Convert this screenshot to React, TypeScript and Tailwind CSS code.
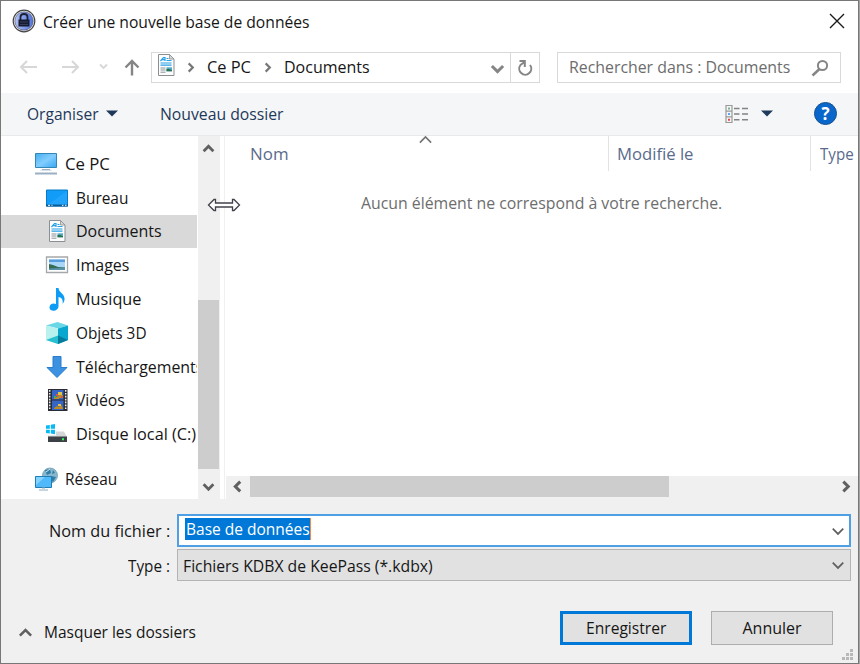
import { useLayoutEffect, useRef, useState, type ReactNode } from 'react';

/** One line of text, condensed to the width that its label takes up. */
function Label({ children, w, className = '' }: { children: string; w: number; className?: string }) {
  const ref = useRef<HTMLSpanElement>(null);
  const [scale, setScale] = useState(1);
  useLayoutEffect(() => {
    if (ref.current) setScale(w / ref.current.offsetWidth);
  }, [w, children]);
  return (
    <span className={`flex h-6 shrink-0 items-center ${className}`} style={{ width: w }}>
      <span
        ref={ref}
        className="inline-block shrink-0 origin-left whitespace-pre"
        style={{ transform: `scaleX(${scale})` }}
      >
        {children}
      </span>
    </span>
  );
}

type Dir = 'up' | 'down' | 'left' | 'right';
const chevrons: Record<Dir, string> = {
  up: 'M1.5 8.5L6 4L10.5 8.5',
  down: 'M1.5 4L6 8.5L10.5 4',
  left: 'M8.5 1.5L4 6L8.5 10.5',
  right: 'M4 1.5L8.5 6L4 10.5',
};
function Chevron({ dir, size = 12, stroke = 2.4, color = '#606060', className = '' }: { dir: Dir; size?: number; stroke?: number; color?: string; className?: string }) {
  return (
    <svg width={size} height={size} viewBox="0 0 12 12" className={`shrink-0 ${className}`}>
      <path d={chevrons[dir]} fill="none" stroke={color} strokeWidth={stroke} />
    </svg>
  );
}

function DocIcon() {
  return (
    <svg width="24" height="24" viewBox="0 0 24 24">
      <path d="M4.500 1.500h11l4.500 4.500v16.500H4.500z" fill="#fcfcfc" stroke="#8c8f91" />
      <path d="M15.500 1.500v4.500h4.500z" fill="#d5d8da" stroke="#8c8f91" strokeWidth=".8" />
      <path d="M6.500 8L9.500 4.500h1.500V8M8 6.700h3M12.500 5.500h2M12.500 7.500h5M6.500 10h11M6.500 12.200h11" fill="none" stroke="#25a0e8" strokeWidth="1.200" />
      <path d="M6.500 15h5M6.500 17h5M6.500 19.200h5" stroke="#8a9298" />
      <path d="M12.500 14.300h5.500v4h-5.500z" fill="#54a9c9" />
      <path d="M12.500 18.300v-2l2-.5 3.500 1.500v1z" fill="#28724a" />
    </svg>
  );
}
function PcIcon() {
  return (
    <svg width="24" height="24" viewBox="0 0 24 24">
      <defs><linearGradient id="pc" x2="1" y2="1"><stop stopColor="#45aeee" /><stop offset=".5" stopColor="#82cdff" /><stop offset="1" stopColor="#35a7f4" /></linearGradient></defs>
      <path d="M1.500 1.500h21v14h-21z" fill="url(#pc)" stroke="#3287b7" />
      <path d="M8 17.500h8" stroke="#8fa5b8" /><path d="M6.500 18.300h11" stroke="#d0dae3" strokeWidth="1" />
      <path d="M1 21.500h22" stroke="#9aafc5" strokeWidth="2" />
    </svg>
  );
}
function DesktopIcon() {
  return (
    <svg width="24" height="24" viewBox="0 0 24 24">
      <path d="M1.500 4h21v16h-21z" fill="#119cf8" stroke="#087bc4" />
      <path d="M2 19.500L22 5v14.500z" fill="#22a4fc" />
      <path d="M1 19.500h22" stroke="#075d96" strokeWidth="2" />
      <path d="M3 19.300h2M6.500 19.300h1M17 19.300h1.500M20 19.300h1.500" stroke="#fff" />
    </svg>
  );
}
function ImagesIcon() {
  return (
    <svg width="24" height="24" viewBox="0 0 24 24">
      <path d="M1.500 4h21v15.500h-21z" fill="#fff" stroke="#a5a8ab" strokeWidth="1.300" />
      <path d="M4 6.500h16V17H4z" fill="#a9d6f6" /><path d="M4 6.500h16V9H4z" fill="#579ddd" />
      <path d="M4 11l4 1 5 2 7 .5V17H4z" fill="#336b53" /><path d="M4 15.500l16-1V17H4z" fill="#5790a7" />
    </svg>
  );
}
function MusicIcon() {
  return (
    <svg width="24" height="24" viewBox="0 0 24 24">
      <path d="M11 1h2.500c.3 5 6.500 5.500 6 11.500-.1 1.700-1 3.300-2 4.200.9-4-.8-6-4-6.700v9c0 6-9 6-9 1.500 0-3.300 3.500-5 6.500-3.500z" fill="#0c9cf5" />
    </svg>
  );
}
function CubeIcon() {
  return (
    <svg width="24" height="24" viewBox="0 0 24 24">
      <path d="M1 4.500L12.500 1 23 4.500 13 7.500z" fill="#69d7e5" />
      <path d="M1 4.500l12 3V23L1 19z" fill="#b9f1ef" /><path d="M13 7.500l10-3V19L13 23z" fill="#07a7cf" />
      <path d="M1 19l12-4.500V23z" fill="#28bfd0" /><path d="M13 14.500L23 19l-10 4z" fill="#057b9e" />
    </svg>
  );
}
function DownloadIcon() {
  return (
    <svg width="24" height="24" viewBox="0 0 24 24">
      <path d="M8 1.500h8v11h6L12 22.500 2 12.500h6z" fill="#3c91e0" stroke="#2a7dcc" />
    </svg>
  );
}
function VideoIcon() {
  return (
    <svg width="24" height="24" viewBox="0 0 24 24">
      <path d="M3 1h19.500v22H3z" fill="#292c32" />
      <path d="M4.700 2v20M20.700 2v20" stroke="#eee" strokeWidth="1.500" strokeDasharray="1.700 1.200" />
      <path d="M7 2h11.500v9.500H7zM7 12.500h11.500V22H7z" fill="#3565c5" />
      <path d="M9 9h3l2-2h4v3h-4v1H9zM9 20l3-2 2 1 2-2 2 3v1H9z" fill="#be8a21" />
      <path d="M13 4h4v3h-4zM13 16h3v2h-3z" fill="#e3c342" /><path d="M11 6h2v2h-2zM16 8h2v2h-2z" fill="#dd563f" />
      <path d="M9 8h2v2H9z" fill="#4bac52" />
    </svg>
  );
}
function DiskIcon() {
  return (
    <svg width="24" height="24" viewBox="0 0 24 24">
      <path d="M1 3.500l3.800-.6v3.800H1zM5.800 2.700L10 2v4.700H5.800zM1 7.700h3.800v3.800L1 10.900zM5.800 7.700H10v4.600l-4.200-.7z" fill="#09b9f3" />
      <path d="M11 9.500h8l3 5.500H3v-1.500h8z" fill="#d4d6d8" />
      <path d="M3 14.500h19V20H3z" fill="#3b4144" /><path d="M3 14.500h19" stroke="#878d90" />
      <path d="M17 17.300h2" stroke="#3aff63" strokeWidth="2" />
    </svg>
  );
}
function NetworkIcon() {
  return (
    <svg width="24" height="24" viewBox="0 0 24 24">
      <circle cx="16" cy="8.500" r="7.500" fill="#87b8cf" stroke="#6693aa" strokeWidth=".7" />
      <path d="M11 3l5-1 1 4-4 2zM17 9l5 1-3 5-3-3zM19 3l2 3-3 1z" fill="#327da4" />
      <path d="M12 5l4-3" stroke="#d2edf5" />
      <path d="M1.500 9.500h16v11h-16z" fill="#50b9fa" stroke="#1f7db5" />
      <path d="M2 10h9L2 18z" fill="#83d2ff" /><path d="M5 23h9M8 21h3" stroke="#8eabbd" />
    </svg>
  );
}
function LockIcon() {
  return (
    <svg width="24" height="24" viewBox="0 0 24 24">
      <defs><linearGradient id="lock"><stop stopColor="#b6c4f4" /><stop offset="1" stopColor="#4f72dc" /></linearGradient></defs>
      <circle cx="12" cy="12" r="10.800" fill="#fff" stroke="#444" strokeWidth="1.200" />
      <circle cx="12" cy="12" r="9.200" fill="url(#lock)" stroke="#52576b" strokeWidth=".7" />
      <path d="M8.500 11V8c0-4 7-4 7 0v3" fill="none" stroke="#1b2035" strokeWidth="1.800" />
      <path d="M6.500 10.500h11v7h-11z" fill="#171b30" /><path d="M8 13h8M8 15.500h8" stroke="#3d4665" strokeWidth=".8" />
    </svg>
  );
}

function TreeRow({ icon, text, w, selected = false, root = false }: { icon: ReactNode; text: string; w: number; selected?: boolean; root?: boolean }) {
  return (
    <div className={`flex h-[33.8px] shrink-0 items-center ${root ? 'gap-[7px] pl-[33px]' : 'gap-[7px] pl-[44px]'} ${selected ? 'bg-[#d9d9d9]' : ''}`}>
      <span className="shrink-0">{icon}</span>
      <Label w={w}>{text}</Label>
    </div>
  );
}

function TitleBar() {
  return (
    <div className="flex h-[50px] items-start pl-[11px] pr-[13px] pt-[8px]">
      <LockIcon />
      <Label w={267} className="ml-[7px] mt-px">Créer une nouvelle base de données</Label>
      <svg width="16" height="16" viewBox="0 0 16 16" className="ml-auto mt-[4px]"><path d="M1 1l14 14M15 1L1 15" stroke="#1a1a1a" strokeWidth="1.400" /></svg>
    </div>
  );
}

function AddressBar() {
  return (
    <div className="flex h-[42px] items-start pt-px">
      <svg width="150" height="31" viewBox="0 0 150 31" fill="none" className="shrink-0">
        <path d="M36 15H20M26 9l-6 6 6 6M61 15h16M71 9l6 6-6 6" stroke="#d7d7d7" strokeWidth="2" />
        <path d="M99 12.500l3.500 3.500 3.500-3.500" stroke="#d7d7d7" strokeWidth="1.800" />
        <path d="M131 23.500V9M124.500 15.500L131 9l6.500 6.500" stroke="#858585" strokeWidth="2.400" />
      </svg>
      <div className="flex h-[31px] w-[389px] border border-[#d9d9d9]">
        <div className="flex flex-1 items-center pb-px pl-[2px]">
          <span className="-mt-1"><DocIcon /></span>
          <Chevron dir="right" size={11} color="#777" className="ml-[7px] mt-px" />
          <Label w={44} className="ml-[11px]">Ce PC</Label>
          <Chevron dir="right" size={11} color="#777" className="ml-[11px] mt-px" />
          <Label w={86} className="ml-[11px]">Documents</Label>
          <Chevron dir="down" size={15} color="#858585" className="ml-auto mr-[5px] mt-[3px]" />
        </div>
        <div className="flex w-[29px] items-center justify-center border-l border-[#d9d9d9]">
          <svg width="16" height="18" viewBox="0 0 16 18" fill="none" className="mt-px"><path d="M13 6A6 6 0 1 1 3.500 6L7.500 3M2.500 2h5.300v6" stroke="#858585" strokeWidth="2" /></svg>
        </div>
      </div>
      <div className="ml-[17px] flex h-[31px] w-[284px] items-center border border-[#d9d9d9] pb-px pl-[11px] text-[#6d6d6d]">
        <Label w={221}>Rechercher dans : Documents</Label>
        <svg width="18" height="18" viewBox="0 0 18 18" fill="none" className="ml-[21px] mt-[2px]"><circle cx="11.500" cy="6.500" r="4.600" stroke="#858585" strokeWidth="2" /><path d="M8.500 10L1.500 16.500" stroke="#858585" strokeWidth="2.500" /></svg>
      </div>
    </div>
  );
}

function Toolbar() {
  return (
    <div className="flex h-[43px] items-center border-b border-[#e8e9eb] bg-[#f5f6f7] pb-px text-[#1e395b]">
      <Label w={72} className="ml-[26px]">Organiser</Label>
      <svg width="12" height="7" viewBox="0 0 12 7" className="ml-[7px]"><path d="M0 .5h12L6 6.500z" fill="#1e395b" /></svg>
      <Label w={124} className="ml-[42px]">Nouveau dossier</Label>
      <svg width="24" height="20" viewBox="0 0 24 20" fill="none" className="ml-auto">
        <path d="M1 1.500h6v17H1zM1 7.200h6M1 12.800h6" stroke="#999" strokeWidth="1.200" />
        <path d="M9 4.500h5.500M17 4.500h6M9 10h5.500M17 10h6M9 15.700h5.500M17 15.700h6" stroke="#838383" strokeWidth="1.500" />
        <path d="M3 4.500h2" stroke="#79b58a" strokeWidth="2" /><path d="M3 10h2" stroke="#64a1ff" strokeWidth="2" /><path d="M3 15.700h2" stroke="#e34742" strokeWidth="2" />
      </svg>
      <svg width="12" height="7" viewBox="0 0 12 7" className="ml-[12px]"><path d="M0 .5h12L6 6.500z" fill="#1e395b" /></svg>
      <div className="ml-[41px] mr-[21px] flex size-[23px] items-center justify-center rounded-full border border-[#17528d] bg-[#0966cb] text-[17px] font-bold text-white">?</div>
    </div>
  );
}

function Sidebar() {
  return (
    <div className="w-[196px] shrink-0 overflow-hidden pt-[11px]">
      <TreeRow root icon={<PcIcon />} text="Ce PC" w={45} />
      <TreeRow icon={<DesktopIcon />} text="Bureau" w={52} />
      <TreeRow selected icon={<DocIcon />} text="Documents" w={86} />
      <TreeRow icon={<ImagesIcon />} text="Images" w={53} />
      <TreeRow icon={<MusicIcon />} text="Musique" w={65} />
      <TreeRow icon={<CubeIcon />} text="Objets 3D" w={71} />
      <TreeRow icon={<DownloadIcon />} text="Téléchargements" w={127} />
      <TreeRow icon={<VideoIcon />} text="Vidéos" w={49} />
      <TreeRow icon={<DiskIcon />} text="Disque local (C:)" w={120} />
      <div className="h-[11px]" />
      <TreeRow root icon={<NetworkIcon />} text="Réseau" w={52} />
    </div>
  );
}

function ResizeCursor() {
  return (
    <svg width="34" height="16" viewBox="0 0 34 16" className="absolute left-[206px] top-[61px]">
      <path d="M1.500 8l5.500-5.500h1.500v3.500h17V2.500H27L32.500 8 27 13.500h-1.500V10h-17v3.500H7z" fill="#fff" stroke="#41414b" strokeWidth="1.300" />
    </svg>
  );
}

function FileList() {
  return (
    <div className="ml-[4px] flex min-w-0 flex-1 flex-col border-l border-[#f0f0f0]">
      <div className="flex h-[35px] text-[#596b8c]">
        <div className="flex w-[384px] shrink-0 items-start border-r border-[#e2e2e2] pl-[25px] pt-[6px]">
          <Label w={38}>Nom</Label>
          <Chevron dir="up" size={15} stroke={1.3} color="#737373" className="-mt-[10px] ml-[130px]" />
        </div>
        <div className="w-[202px] shrink-0 border-r border-[#e2e2e2] pl-[8px] pt-[6px]"><Label w={76}>Modifié le</Label></div>
        <div className="pl-[9px] pt-[6px]"><Label w={34}>Type</Label></div>
      </div>
      <div className="flex-1 pl-[136px] pt-[20px] text-[#6d6d6d]"><Label w={361}>Aucun élément ne correspond à votre recherche.</Label></div>
      <div className="ml-px flex h-[23px] items-start bg-[#f0f0f0]">
        <Chevron dir="left" size={13} stroke={2.8} className="ml-[5px] mt-[4px]" />
        <div className="ml-[6px] h-[21px] w-[419px] bg-[#cdcdcd]" />
        <Chevron dir="right" size={13} stroke={2.8} className="ml-auto mr-[6px] mt-[4px]" />
      </div>
    </div>
  );
}

function Footer() {
  return (
    <div className="flex h-[164px] flex-col bg-[#f0f0f0]">
      <div className="mt-[15px] flex h-[33px] items-center">
        <Label w={121} className="ml-[48px]">Nom du fichier :</Label>
        <div className="ml-[7px] flex h-[33px] w-[674px] items-start border-2 border-[#4f9fe5] bg-white pl-[6px] pt-[2px]">
          <div className="flex h-[22px] items-center border-r border-[#f28b45] bg-[#0078d7] pl-px text-white"><Label w={124}>Base de données</Label></div>
          <Chevron dir="down" size={14} stroke={1.5} className="ml-auto mr-[4px] mt-[6px]" />
        </div>
      </div>
      <div className="mt-[2px] flex h-[32px] items-center">
        <Label w={42} className="ml-[127px] mt-[2px]">Type :</Label>
        <div className="ml-[7px] flex h-[32px] w-[674px] items-center border border-[#b4b4b4] bg-[#e1e1e1] pl-[5px]">
          <Label w={250} className="mt-[2px]">Fichiers KDBX de KeePass (*.kdbx)</Label>
          <Chevron dir="down" size={14} stroke={1.5} className="ml-auto mr-[5px]" />
        </div>
      </div>
      <div className="mt-[30px] flex h-[34px] items-center">
        <Chevron dir="up" size={15} stroke={2} className="ml-[17px] mt-[9px]" />
        <Label w={152} className="ml-[11px] mt-[8px]">Masquer les dossiers</Label>
        <button className="ml-auto flex h-[34px] w-[132px] items-center justify-center border-[3px] border-[#0078d7] bg-[#e1e1e1]"><Label w={80}>Enregistrer</Label></button>
        <button className="ml-[19px] mr-[25px] flex h-[34px] w-[122px] items-center justify-center border border-[#adadad] bg-[#e1e1e1]"><Label w={59}>Annuler</Label></button>
      </div>
      <svg width="13" height="13" viewBox="0 0 13 13" className="ml-auto mr-[4px] mt-[3px]" fill="#b8b8b8"><path d="M9 1h3v3H9zM5 5h3v3H5zM9 5h3v3H9zM1 9h3v3H1zM5 9h3v3H5zM9 9h3v3H9z" /></svg>
    </div>
  );
}

export default function App() {
  return (
    <div className="h-[664px] w-[860px] overflow-hidden bg-[#a3a3a3] font-['Open_Sans','Noto_Sans',sans-serif] text-[16px] leading-6 text-[#161616]">
      <div className="flex h-[664px] w-[859px] flex-col border border-[#777] bg-white">
        <TitleBar />
        <AddressBar />
        <Toolbar />
        <div className="relative flex min-h-0 flex-1">
          <Sidebar />
          <div className="ml-px flex w-[22px] shrink-0 flex-col items-center bg-[#f0f0f0]">
            <Chevron dir="up" size={13} stroke={2.6} className="mr-px mt-[6px]" />
            <div className="mt-[145px] h-[169px] w-[21px] self-start bg-[#cdcdcd]" />
            <Chevron dir="down" size={13} stroke={2.6} className="mr-px mt-[11px]" />
          </div>
          <FileList />
          <ResizeCursor />
        </div>
        <Footer />
      </div>
    </div>
  );
}
